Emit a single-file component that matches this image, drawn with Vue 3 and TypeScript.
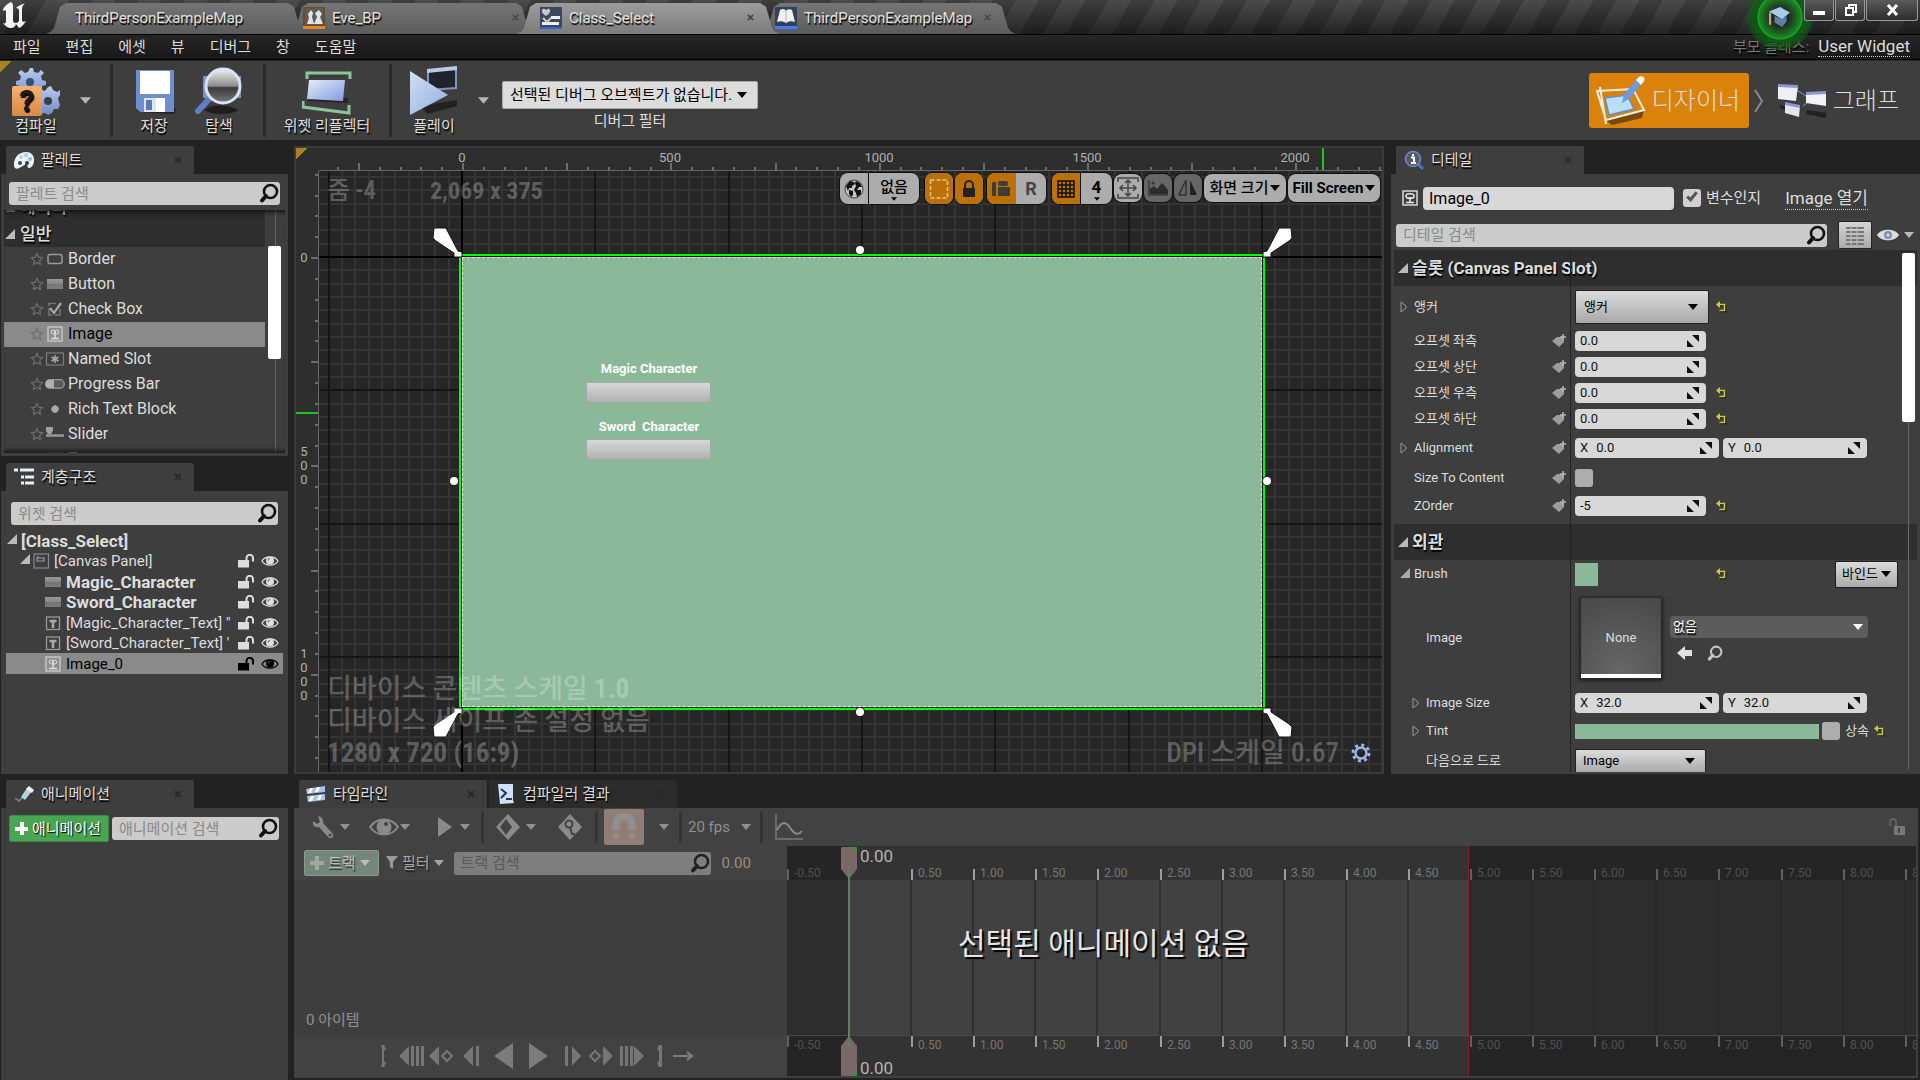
<script setup lang="ts">
import { computed, onBeforeUnmount, onMounted, ref } from 'vue'

interface DocTab { title: string; icon: string; active: boolean; closable: boolean; cls: string }
interface PaletteItem { name: string; icon: string; selected?: boolean }
interface TreeRow { name: string; icon: string; depth: number; bold?: boolean; open?: boolean; selected?: boolean; toggles?: boolean }

const docTabs: DocTab[] = [
  { title: 'ThirdPersonExampleMap', icon: '', active: false, closable: false, cls: 'first' },
  { title: 'Eve_BP', icon: 'i-blueprint', active: false, closable: true, cls: 'second' },
  { title: 'Class_Select', icon: 'i-widgetbp', active: true, closable: true, cls: 'third' },
  { title: 'ThirdPersonExampleMap', icon: 'i-book', active: false, closable: true, cls: 'fourth' },
]

const menus = ['파일', '편집', '에셋', '뷰', '디버그', '창', '도움말']

const paletteItems: PaletteItem[] = [
  { name: 'Border', icon: 'w-border' },
  { name: 'Button', icon: 'w-button' },
  { name: 'Check Box', icon: 'w-check' },
  { name: 'Image', icon: 'w-image', selected: true },
  { name: 'Named Slot', icon: 'w-slot' },
  { name: 'Progress Bar', icon: 'w-progress' },
  { name: 'Rich Text Block', icon: 'w-rich' },
  { name: 'Slider', icon: 'w-slider' },
  { name: 'Text', icon: 'w-text' },
]

const treeRows: TreeRow[] = [
  { name: '[Class_Select]', icon: '', depth: 0, bold: true, open: true },
  { name: '[Canvas Panel]', icon: 'w-canvas', depth: 1, open: true, toggles: true },
  { name: 'Magic_Character', icon: 'w-button', depth: 2, bold: true, toggles: true },
  { name: 'Sword_Character', icon: 'w-button', depth: 2, bold: true, toggles: true },
  { name: '[Magic_Character_Text] "', icon: 'w-text', depth: 2, toggles: true },
  { name: "[Sword_Character_Text] '", icon: 'w-text', depth: 2, toggles: true },
  { name: 'Image_0', icon: 'w-image', depth: 2, selected: true, toggles: true },
]

const offsets = [
  { id: 'off-left', label: '오프셋 좌측', value: '0.0', reset: false },
  { id: 'off-top', label: '오프셋 상단', value: '0.0', reset: false },
  { id: 'off-right', label: '오프셋 우측', value: '0.0', reset: true },
  { id: 'off-bottom', label: '오프셋 하단', value: '0.0', reset: true },
]

const objectName = ref('Image_0')
const isVariable = ref(true)

/* Rulers and the timeline only draw as many marks as the window can show. */
const windowWidth = ref(window.innerWidth)
const windowHeight = ref(window.innerHeight)
const onResize = (): void => {
  windowWidth.value = window.innerWidth
  windowHeight.value = window.innerHeight
}
onMounted(() => window.addEventListener('resize', onResize))
onBeforeUnmount(() => window.removeEventListener('resize', onResize))

const range = (from: number, to: number): number[] =>
  Array.from({ length: Math.max(0, to - from + 1) }, (_, i) => from + i)
const px = (n: number): number => Math.round(n)

/* Designer canvas: 24 slate units map to 10 px at zoom -4. */
const originX = 143
const originY = 86
const gridStep = 40 / 3
const tickStep = 125 / 6
const canvasWidth = computed(() => windowWidth.value - 857)
const canvasHeight = computed(() => windowHeight.value - 480)
const gridX = computed(() => range(-10, Math.ceil((canvasWidth.value - originX) / gridStep)))
const gridY = computed(() => range(-6, Math.ceil((canvasHeight.value - originY) / gridStep)))
const ticksX = computed(() => range(-6, Math.floor((canvasWidth.value - originX) / tickStep)))
const ticksY = computed(() => range(-4, Math.floor((canvasHeight.value - originY) / tickStep)))
const labelsX = computed(() => range(0, Math.floor((canvasWidth.value - originX - 20) / (tickStep * 10))).map((n) => n * 500))
const labelsY = computed(() => range(0, Math.floor((canvasHeight.value - originY - 40) / (tickStep * 10))).map((n) => n * 500))

/* Timeline: one tick every half second. */
const timeOrigin = 62
const timeStep = 62.1
const timeTicks = computed(() => range(-1, Math.floor((windowWidth.value - 791 - timeOrigin) / timeStep)))
const timeX = (k: number): number => Math.round(timeOrigin + timeStep * k)
const timeLabel = (k: number): string => (k / 2).toFixed(2)
</script>

<template>
  <div class="editor">
    <svg class="sprite" aria-hidden="true">
      <defs>
        <linearGradient id="g-blue" x1="0" y1="0" x2="1" y2="1"><stop offset="0" stop-color="#e4ecfb" /><stop offset="1" stop-color="#7f9bdc" /></linearGradient>
        <linearGradient id="g-gear" x1="0" y1="0" x2="0" y2="1"><stop offset="0" stop-color="#b9cdf3" /><stop offset="1" stop-color="#7488c4" /></linearGradient>
        <linearGradient id="g-orange" x1="0" y1="0" x2="0" y2="1"><stop offset="0" stop-color="#f7b16f" /><stop offset="1" stop-color="#d98a45" /></linearGradient>
        <linearGradient id="g-play" x1="0" y1="0" x2="1" y2="1"><stop offset="0" stop-color="#d3dcf5" /><stop offset="1" stop-color="#8fb2dc" /></linearGradient>
        <linearGradient id="g-glass" x1="0" y1="0" x2="0" y2="1"><stop offset="0" stop-color="#f2f2f2" /><stop offset=".5" stop-color="#8c8c8c" /><stop offset=".55" stop-color="#3c3c3c" /><stop offset="1" stop-color="#777" /></linearGradient>
        <linearGradient id="g-btn" x1="0" y1="0" x2="0" y2="1"><stop offset="0" stop-color="#999" /><stop offset=".5" stop-color="#858585" /><stop offset=".5" stop-color="#757575" /><stop offset="1" stop-color="#7c7c7c" /></linearGradient>
      </defs>
      <symbol id="caret" viewBox="0 0 10 6"><path d="M0 0h10L5 6z" fill="currentColor" /></symbol>
      <symbol id="close" viewBox="0 0 8 8"><path d="M1 1l6 6M7 1L1 7" stroke="currentColor" stroke-width="2" /></symbol>
      <symbol id="open" viewBox="0 0 10 10"><path d="M10 0v10H0z" fill="currentColor" /></symbol>
      <symbol id="closed" viewBox="0 0 7 12"><path d="M1 1l5 4v2l-5 4z" fill="none" stroke="currentColor" /></symbol>
      <symbol id="mag" viewBox="0 0 20 20"><circle cx="11.500" cy="8.500" r="6.500" fill="none" stroke="currentColor" stroke-width="2.600" /><path d="M7 13L3 17.500" stroke="currentColor" stroke-width="4" stroke-linecap="round" /></symbol>
      <symbol id="star" viewBox="0 0 14 14"><path d="M7 1.500l1.700 3.700 3.900.5-2.900 2.700.8 4L7 10.500l-3.500 1.900.8-4L1.400 5.700l3.900-.5z" fill="none" stroke="currentColor" stroke-width="1.200" /></symbol>
      <symbol id="eye" viewBox="0 0 18 14"><path d="M1 7C4 1.500 14 1.500 17 7C14 12.500 4 12.500 1 7z" fill="none" stroke="currentColor" stroke-width="1.300" /><circle cx="9" cy="6.500" r="4" fill="currentColor" /><path d="M7 6.500a2 2 0 0 1 2-2" stroke="#5e5e5e" fill="none" /></symbol>
      <symbol id="unlock" viewBox="0 0 17 14"><path d="M0 6h11v7.500H0z" fill="currentColor" /><path d="M8.500 6V4a3 3 0 0 1 6.500 0v3.500" fill="none" stroke="currentColor" stroke-width="2" /></symbol>
      <symbol id="tag" viewBox="0 0 14 14"><path d="M0 7l5-4h5l2 2v3l-5 5z" fill="#9c9c9c" /><path d="M11 0v6M8 3h6" stroke="#b8b8b8" stroke-width="1.500" /></symbol>
      <symbol id="reset" viewBox="0 0 12 12"><path d="M3 4.500h7.500v6H5" fill="none" stroke="#111" stroke-width="1.500" /><path d="M2 3.500h7.500v6H4.500" fill="none" stroke="#c8cc3f" stroke-width="1.600" /><path d="M5 0v7L1 3.500z" fill="#c8cc3f" /></symbol>
      <symbol id="spin" viewBox="0 0 12 12"><path d="M5 0h7v7z" fill="#111" /><path d="M0 5v7h7z" fill="#111" /></symbol>
      <symbol id="w-border" viewBox="0 0 20 16"><rect x="3" y="3.500" width="14" height="9" rx="2" fill="none" stroke="#9a9a9a" stroke-width="1.500" /></symbol>
      <symbol id="w-button" viewBox="0 0 20 16"><rect x="2" y="3" width="16" height="10" fill="url(#g-btn)" /></symbol>
      <symbol id="w-check" viewBox="0 0 20 16"><path d="M4 5V2.500h7M4 7v7h3M10 14h5V8" fill="none" stroke="#777" stroke-width="1.500" /><path d="M5 7l4 5 7-10" fill="none" stroke="#a8a8a8" stroke-width="2.200" /></symbol>
      <symbol id="w-image" viewBox="0 0 20 16"><rect x="3" y="1" width="14" height="14" fill="#8f8f8f" stroke="#c4c4c4" stroke-width="1.500" /><circle cx="8.300" cy="6" r="2" fill="none" stroke="#ddd" /><circle cx="11.700" cy="6" r="2" fill="none" stroke="#ddd" /><path d="M10 5v7M6 12.500h8" stroke="#ddd" stroke-width="1.500" /></symbol>
      <symbol id="w-slot" viewBox="0 0 20 16"><rect x="1.500" y="2" width="17" height="12" fill="none" stroke="#7d7d7d" stroke-width="1.200" /><path d="M10 4v8M6.500 6l7 4M13.500 6l-7 4" stroke="#aaa" stroke-width="1.500" /></symbol>
      <symbol id="w-progress" viewBox="0 0 20 16"><rect x=".7" y="3.700" width="18.500" height="8.500" rx="4" fill="#5a5a5a" stroke="#999" stroke-width="1.300" /><path d="M4 4h5v8H4a3.500 4 0 0 1 0-8z" fill="#b0b0b0" /></symbol>
      <symbol id="w-rich" viewBox="0 0 20 16"><path d="M10 4l3 1.500L14 8l-1.500 3L10 12l-2.500-1L6 8l1.500-2.500z" fill="#a8a8a8" /></symbol>
      <symbol id="w-slider" viewBox="0 0 20 16"><path d="M1 9.500h18" stroke="#999" stroke-width="2.500" /><path d="M1 1h7v4L6 8H3L1 5z" fill="#a0a0a0" /></symbol>
      <symbol id="w-text" viewBox="0 0 20 16"><rect x="3.500" y="2" width="13" height="12.500" fill="none" stroke="#999" stroke-width="1.300" /><path d="M6.500 6h7M10 6v7" stroke="#aaa" stroke-width="2.500" /></symbol>
      <symbol id="w-canvas" viewBox="0 0 20 16"><rect x="3" y="1" width="14.500" height="14" fill="none" stroke="#8a8a8a" stroke-width="1.200" /><path d="M6 5h7v3H6zM7 5V3" fill="none" stroke="#9c9cae" stroke-width="1.200" /></symbol>
      <symbol id="i-blueprint" viewBox="0 0 22 22"><path d="M0 0h22v22H0z" fill="#6a4a28" /><path d="M2 1h18v17H2z" fill="#5c5c5c" /><path d="M4 17l2-6-1-4 3-4 2 3-1 4 2 7zM11 17l3-7-2-4 4-3 3 4-2 3 3 7z" fill="#e4e4e4" /><path d="M0 19h22v3H0z" fill="#e58a1c" /></symbol>
      <symbol id="i-widgetbp" viewBox="0 0 22 22"><path d="M0 0h22v22H0z" fill="#3c4860" /><path d="M2 3c2-3 4 0 4 0s3-3 4 0c1 3-4 6-4 6S1 6 2 3z" fill="#c9c9c9" /><path d="M11 9h9v3h-9zM2 15h17v3H2z" fill="#efefef" /><path d="M3 11l4 4 4-4" fill="none" stroke="#ccc" stroke-width="2" /><path d="M0 20h22v2H0z" fill="#2f62d8" /></symbol>
      <symbol id="i-book" viewBox="0 0 22 22"><path d="M0 0h22v22H0z" fill="#33405c" /><path d="M2 15L5 3c3-2 5-1 6 1 1-2 4-2 6-1l3 12c-3-1-6-1-9 1-3-2-6-2-9-1z" fill="#f0f0f0" /><path d="M11 4v12" stroke="#bbb" /><path d="M0 19h22v3H0z" fill="#3f7bff" /></symbol>
    </svg>

    <header class="titlebar">
      <svg class="logo" viewBox="0 0 24 28" role="img" aria-label="Unreal Engine">
        <path d="M9 1C5 3 1 6 1 10c2-1 3-1 3 1v9c0 2-1 3-3 2 2 3 5 5 8 5 2 0 4-1 5-4l3 4c3-1 5-4 7-7-2 1-4 1-4-1V8c0-2 1-4 3-6-3 1-7 3-9 5 2 0 3 1 3 3v10c-1 1-2 2-3 2-2 0-3-1-3-3V6c0-2 0-4-2-5z" fill="#f4f4f4" />
      </svg>
      <nav class="doc-tabs">
        <div v-for="(t, i) in docTabs" :key="i" class="doc-tab" :class="[t.cls, { active: t.active }]">
          <svg v-if="t.icon" class="doc-icon"><use :href="'#' + t.icon" /></svg>
          <span class="doc-title">{{ t.title }}</span>
          <button v-if="t.closable" class="bare tab-x" aria-label="탭 닫기"><svg width="7" height="7"><use href="#close" /></svg></button>
        </div>
      </nav>
      <div class="tutorial">
        <svg viewBox="0 0 20 20" width="22" height="22"><path d="M0 5l10-4 9 5-7 6z" fill="#a9cbea" /><path d="M5 9v6l7 4 4-5V9l-4 3z" fill="#5e7f9e" /><path d="M1 6v11" stroke="#c8a468" stroke-width="2" /></svg>
      </div>
      <div class="window-buttons">
        <button class="win" aria-label="최소화"><svg width="14" height="12"><path d="M1 7h12v4H1z" fill="#fff" /></svg></button>
        <button class="win" aria-label="이전 크기로"><svg width="13" height="12"><path d="M2 4h7v7H2zM5 4V1h7v7H9" fill="none" stroke="#fff" stroke-width="2" /></svg></button>
        <button class="win wide" aria-label="닫기"><svg width="13" height="12"><path d="M2 1l9 10M11 1L2 11" stroke="#fff" stroke-width="3" /></svg></button>
      </div>
    </header>

    <div class="menubar">
      <button v-for="m in menus" :key="m" class="bare menu-item">{{ m }}</button>
      <span class="parent-label">부모 클래스:</span>
      <a href="#" class="parent-link">User Widget</a>
    </div>

    <div class="toolbar">
      <span class="fold"></span>
      <button class="bare tool compile">
        <svg viewBox="0 0 48 50" width="48" height="50">
          <path d="M18 2l3 0 1 4 4 1 3-3 3 3-3 3 1 4 4 1v4l-4 1-1 4 2 3-3 3-3-3-4 1-1 4h-4l-1-4-3-1-3 3-3-3 3-4-1-3-4-1v-4l4-1 1-4-3-3 3-3 4 3 3-1z" fill="url(#g-gear)" />
          <circle cx="18" cy="16" r="4" fill="#33506f" />
          <path d="M36 21l3-1 2 4 4 2 3-2v5l-2 3 1 4 1 3-2 4-4 0-2 4-4 2-3-2-4 1-3-3v-18l4-3 3 1z" fill="url(#g-gear)" />
          <circle cx="36" cy="35" r="4" fill="#3c3c44" />
          <rect x="0" y="20" width="30" height="30" rx="2" fill="url(#g-orange)" />
          <text x="15" y="45" text-anchor="middle" font-family="Roboto" font-weight="900" font-size="29" fill="#1a1a1a">?</text>
        </svg>
        <span>컴파일</span>
      </button>
      <button class="bare drop" aria-label="컴파일 옵션"><svg width="11" height="7"><use href="#caret" /></svg></button>
      <i class="bar"></i>
      <button class="bare tool save">
        <svg viewBox="0 0 48 50" width="48" height="50">
          <path d="M8 46l36 2 2-6H10z" fill="#222" /><path d="M6 4h38v42H10l-4-4z" fill="#6d8ed0" /><path d="M10 5h30v23H10z" fill="#fff" /><path d="M14 32h21v14H14z" fill="#dfe4ee" /><path d="M16 34h6v10h-6z" fill="#5b78b8" /><path d="M26 32h9v14h-9z" fill="#fff" />
        </svg>
        <span>저장</span>
      </button>
      <button class="bare tool find">
        <svg viewBox="0 0 50 50" width="50" height="50">
          <path d="M10 44c10-8 30-4 34 0-6 5-24 6-34 0z" fill="#1f1f1f" /><path d="M9 10h38v22H9z" fill="#7a93c6" />
          <path d="M16 32L4 45" stroke="#5f7fc4" stroke-width="6" stroke-linecap="round" /><circle cx="29" cy="20" r="17" fill="url(#g-glass)" stroke="#d7e2f5" stroke-width="3" />
        </svg>
        <span>탐색</span>
      </button>
      <i class="bar"></i>
      <button class="bare tool reflector">
        <svg viewBox="0 0 50 50" width="50" height="50">
          <path d="M5 13V7h43v6M1 35v6l46 6v-8" fill="none" stroke="#8dc49a" stroke-width="3" /><path d="M6 35l40 2v-5H6z" fill="#252525" /><path d="M7 14h36l-2 21-36-2z" fill="url(#g-blue)" />
        </svg>
        <span>위젯 리플렉터</span>
      </button>
      <i class="bar"></i>
      <button class="bare tool play">
        <svg viewBox="0 0 50 50" width="50" height="50">
          <path d="M12 40l36-6v6l-30 8z" fill="#222" /><path d="M19 5l28-3v20l-28 2z" fill="#20242c" stroke="#7e96bb" stroke-width="2" /><path d="M18 3l30-3v4l-30 3z" fill="#b9cdea" /><path d="M1 5l38 24L1 49z" fill="url(#g-play)" />
        </svg>
        <span>플레이</span>
      </button>
      <button class="bare drop" aria-label="플레이 옵션"><svg width="11" height="7"><use href="#caret" /></svg></button>
      <div class="debug">
        <span class="combo debug-combo">
          <select id="debug-filter"><option>선택된 디버그 오브젝트가 없습니다.</option></select>
          <svg width="10" height="6"><use href="#caret" /></svg>
        </span>
        <label for="debug-filter">디버그 필터</label>
      </div>
      <div class="modes">
        <button class="bare mode on">
          <svg viewBox="0 0 50 50" width="50" height="50">
            <path d="M8 43l40-9-2 8-30 7z" fill="#7a4a0c" /><path d="M1 15l36-2 11 21-38 10zM4 11l6 37" fill="none" stroke="#f3efe6" stroke-width="2" /><path d="M9 22l22-3 7 14-25 6z" fill="#b9dff5" stroke="#5f90d0" stroke-width="1.500" /><path d="M26 27l2-9L42 2l5 4-14 17z" fill="#6f9be6" /><path d="M40 4l3-3c3-2 7 1 5 4l-3 4z" fill="#fff" />
          </svg>
          <span>디자이너</span>
        </button>
        <svg class="chevron" viewBox="0 0 10 24"><path d="M1 1l7 11-7 11" fill="none" stroke="#8a8a8a" stroke-width="2" /></svg>
        <button class="bare mode">
          <svg viewBox="0 0 50 36" width="50" height="36">
            <path d="M18 6l14 9M26 23l10-8" stroke="#8e9cc0" /><path d="M30 27l20 3-2 5-19-4z" fill="#222" /><path d="M2 22l8 2 0 3-6-1z" fill="#222" /><path d="M1 2l20 1-2 15-18-2z" fill="#eef0f5" /><path d="M1 1l20 1v3L1 4z" fill="#8898d4" /><path d="M29 10l20-1v14l-20-3z" fill="#f2f3f6" /><path d="M29 9l20-1v3l-20 1z" fill="#8898d4" /><path d="M8 20l15 3-1 11-14-4z" fill="#e3e5ea" /><path d="M8 19l15 3v3L8 22z" fill="#8898d4" />
          </svg>
          <span>그래프</span>
        </button>
      </div>
    </div>

    <main class="body">
      <aside class="left">
        <section class="dock palette">
          <div class="dock-tab">
            <svg viewBox="0 0 20 18" width="20" height="18"><path d="M0 14C0 6 5 1 12 1c5 0 8 3 8 8 0 4-2 8-5 8-2 0-1-4-3-4-1 0-2 2-5 3-3 2-7 3-7-2z" fill="#eef4fb" /><circle cx="6" cy="12" r="2" fill="#444" /><circle cx="13" cy="12" r="2" fill="#3a3a3a" /><circle cx="7" cy="6" r="2" fill="#b9d4f3" /><circle cx="12" cy="4" r="2" fill="#a5c8ef" /><circle cx="16" cy="8" r="2" fill="#8fb9ea" /></svg>
            <span>팔레트</span><button class="bare tab-x" aria-label="닫기"><svg width="8" height="8"><use href="#close" /></svg></button>
          </div>
          <div class="pane">
            <div class="search"><input type="search" aria-label="팔레트 검색" placeholder="팔레트 검색" /><svg><use href="#mag" /></svg></div>
            <div class="scroller">
              <div class="palette-list">
                <h3 class="category"><svg width="10" height="10"><use href="#open" /></svg>에디터</h3>
                <h3 class="category"><svg width="10" height="10"><use href="#open" /></svg>일반</h3>
                <ul>
                  <li v-for="p in paletteItems" :key="p.name" :class="{ sel: p.selected }">
                    <svg class="star"><use href="#star" /></svg><svg class="wicon"><use :href="'#' + p.icon" /></svg><span>{{ p.name }}</span>
                  </li>
                </ul>
              </div>
              <div class="track"><i class="thumb"></i></div>
            </div>
          </div>
        </section>

        <section class="dock hierarchy">
          <div class="dock-tab">
            <svg viewBox="0 0 20 18" width="20" height="18"><path d="M0 2h4M6 2h14M7 9h3M11 9h9M7 15h3M11 15h9" stroke="#e6eff6" stroke-width="3" /></svg>
            <span>계층구조</span><button class="bare tab-x" aria-label="닫기"><svg width="8" height="8"><use href="#close" /></svg></button>
          </div>
          <div class="pane">
            <div class="search"><input type="search" aria-label="위젯 검색" placeholder="위젯 검색" /><svg><use href="#mag" /></svg></div>
            <ul class="tree">
              <li v-for="r in treeRows" :key="r.name" :class="['d' + r.depth, { sel: r.selected, bold: r.bold }]">
                <svg v-if="r.open" class="exp"><use href="#open" /></svg>
                <svg v-if="r.icon" class="wicon"><use :href="'#' + r.icon" /></svg>
                <span class="tree-name">{{ r.name }}</span>
                <template v-if="r.toggles">
                  <button class="bare" aria-label="잠금"><svg width="17" height="14"><use href="#unlock" /></svg></button>
                  <button class="bare" aria-label="표시"><svg width="18" height="14"><use href="#eye" /></svg></button>
                </template>
              </li>
            </ul>
          </div>
        </section>

        <section class="dock animations">
          <div class="dock-tab">
            <svg viewBox="0 0 20 18" width="20" height="18"><path d="M1 13l4 3L14 7" fill="none" stroke="#777" stroke-width="2" /><path d="M7 12l6-9 5 3-7 9z" fill="#b9d0dd" /><path d="M12 4l3-3 5 4-2 3z" fill="#f2f6f8" /></svg>
            <span>애니메이션</span><button class="bare tab-x" aria-label="닫기"><svg width="8" height="8"><use href="#close" /></svg></button>
          </div>
          <div class="pane anim-row">
            <button class="add-anim"><svg width="13" height="13"><path d="M5 0h4v5h4v4H9v4H5V9H0V5h5z" fill="#fff" /></svg>애니메이션</button>
            <div class="search"><input type="search" aria-label="애니메이션 검색" placeholder="애니메이션 검색" /><svg><use href="#mag" /></svg></div>
          </div>
        </section>
      </aside>

      <div class="right">
        <div class="upper">
          <section class="viewport">
            <span class="fold"></span>
            <div class="corner"></div>
            <svg class="ruler-h">
              <g stroke="#6c6c6c" stroke-width="2">
                <line v-for="t in ticksX" :key="t" :x1="px(originX + 1 + t * tickStep)" :x2="px(originX + 1 + t * tickStep)" :y1="t % 5 === 0 ? 15 : 19" y2="23" />
              </g>
              <text v-for="l in labelsX" :key="l" :x="px(originX + l / 2.4)" y="14" text-anchor="middle">{{ l }}</text>
              <line x1="1004" x2="1004" y1="0" y2="23" stroke="#1fc41f" stroke-width="2" />
            </svg>
            <svg class="ruler-v">
              <g stroke="#6c6c6c" stroke-width="2">
                <line v-for="t in ticksY" :key="t" :y1="px(originY + 1 + t * tickStep)" :y2="px(originY + 1 + t * tickStep)" :x1="t % 5 === 0 ? 15 : 19" x2="22" />
              </g>
              <template v-for="l in labelsY" :key="l">
                <text v-for="(c, i) in String(l)" :key="i" x="8" :y="px(originY + 5 + l / 2.4 + (i - (String(l).length - 1) / 2) * 14)" text-anchor="middle">{{ c }}</text>
              </template>
              <line x1="0" x2="22" y1="242" y2="242" stroke="#1fc41f" stroke-width="2" />
            </svg>
            <div class="canvas">
              <svg class="grid">
                <g stroke="#343434" stroke-width="2">
                  <line v-for="g in gridX" :key="'x' + g" :x1="px(originX + g * gridStep)" :x2="px(originX + g * gridStep)" y1="0" y2="100%" />
                  <line v-for="g in gridY" :key="'y' + g" :y1="px(originY + g * gridStep)" :y2="px(originY + g * gridStep)" x1="0" x2="100%" />
                </g>
                <g stroke="#151515" stroke-width="2">
                  <template v-for="g in gridX" :key="'mx' + g"><line v-if="g % 10 === 0" :x1="px(originX + g * gridStep)" :x2="px(originX + g * gridStep)" y1="0" y2="100%" /></template>
                  <template v-for="g in gridY" :key="'my' + g"><line v-if="g % 10 === 0" :y1="px(originY + g * gridStep)" :y2="px(originY + g * gridStep)" x1="0" x2="100%" /></template>
                </g>
                <g stroke="#000" stroke-width="2"><line :x1="originX" :x2="originX" y1="0" y2="100%" /><line :y1="originY" :y2="originY" x1="0" x2="100%" /></g>
              </svg>
              <div class="design">
                <span class="slot-text magic-text">Magic Character</span>
                <button class="slot-btn magic-btn" aria-label="Magic_Character"></button>
                <span class="slot-text sword-text">Sword&nbsp; Character</span>
                <button class="slot-btn sword-btn" aria-label="Sword_Character"></button>
                <svg class="anchor tl" viewBox="0 0 31 31"><path d="M2 1h12l3 6 9 17 4 1v5h-8v-4L4 14l-3-3z" fill="#fff" stroke="#111" /></svg>
                <svg class="anchor tr" viewBox="0 0 31 31"><path d="M2 1h12l3 6 9 17 4 1v5h-8v-4L4 14l-3-3z" fill="#fff" stroke="#111" /></svg>
                <svg class="anchor bl" viewBox="0 0 31 31"><path d="M2 1h12l3 6 9 17 4 1v5h-8v-4L4 14l-3-3z" fill="#fff" stroke="#111" /></svg>
                <svg class="anchor br" viewBox="0 0 31 31"><path d="M2 1h12l3 6 9 17 4 1v5h-8v-4L4 14l-3-3z" fill="#fff" stroke="#111" /></svg>
                <i class="dot n"></i><i class="dot s"></i><i class="dot w"></i><i class="dot e"></i>
              </div>
              <div class="hud-top"><span>줌 -4</span><b class="coords">2,069 x 375</b></div>
              <div class="hud-bottom">
                <div><p>디바이스 콘텐츠 스케일 <b>1.0</b></p><p>디바이스 세이프 존 설정 없음</p><p><b>1280 x 720 (16:9)</b></p></div>
                <div class="dpi"><span>DPI 스케일 0.67</span>
                  <button class="bare" aria-label="설정"><svg width="20" height="20" viewBox="0 0 20 20"><circle cx="10" cy="10" r="5.500" fill="none" stroke="#9db2e6" stroke-width="2.500" /><circle cx="10" cy="10" r="8" fill="none" stroke="#9db2e6" stroke-width="3" stroke-dasharray="3 3.280" /></svg></button>
                </div>
              </div>
              <div class="view-tools">
                <div class="group">
                  <button class="vt" aria-label="현지화"><svg width="20" height="20" viewBox="0 0 20 20"><circle cx="10" cy="10" r="9" fill="#c4c4c4" stroke="#444" /><path d="M2 7l4-5 4 1 1 2-3 2 0 2-3 0-1 3zM5 11l4 1 0 4-2 2-2-3zM12 2l4 2 2 4-3 0-2 3 4 0 0 4-4 3-1-4-2-3 2-4-1-3z" fill="#111" /></svg></button>
                  <button class="vt text lang"><span>없음</span><svg width="6" height="4"><use href="#caret" /></svg></button>
                </div>
                <div class="group first-orange"><button class="vt on" aria-label="아웃라인"><svg width="20" height="22"><rect x="1.500" y="2" width="17" height="18" fill="none" stroke="#e3c493" stroke-width="1.500" stroke-dasharray="4 2" /></svg></button></div>
                <div class="group"><button class="vt on" aria-label="잠금 존중"><svg width="16" height="20"><path d="M2 9h12v9H2z" fill="#222" /><path d="M4 9V6a4 4 0 0 1 8 0v3" fill="none" stroke="#222" stroke-width="2" /></svg></button></div>
                <div class="group loc"><button class="vt on" aria-label="레이아웃 변환"><svg width="20" height="18"><rect x="1" y="2" width="4" height="14" rx="1" fill="#403c38" /><rect x="7" y="1" width="10" height="5" rx="2" fill="#403c38" /><rect x="7" y="7" width="12" height="9" rx="1" fill="#403c38" /></svg></button><button class="vt text r">R</button></div>
                <div class="group snap"><button class="vt on" aria-label="그리드 스냅"><svg width="20" height="20"><path d="M2 2h16v16H2zM2 6h16M2 10h16M2 14h16M6 2v16M10 2v16M14 2v16" fill="none" stroke="#111" stroke-width="1.500" /></svg></button><button class="vt text four"><span>4</span><svg width="6" height="4"><use href="#caret" /></svg></button></div>
                <div class="group low"><button class="vt" aria-label="화면 맞춤"><svg width="22" height="22"><path d="M1 5V1h20v4M1 17v4h20v-4M11 3v16M3 11h16M8 6l3-3 3 3M8 16l3 3 3-3M6 8l-3 3 3 3M16 8l3 3-3 3" fill="none" stroke="#444" stroke-width="1.500" /></svg></button></div>
                <div class="group low dim"><button class="vt" aria-label="미리보기 배경"><svg width="22" height="18"><path d="M1 1h2v14h18v2H1z" fill="#444" /><path d="M3 15V10l4-3 3 3 5-6 3 3 3 4v4z" fill="#2c2c2c" /><circle cx="6" cy="4" r="1.500" fill="#333" /></svg></button></div>
                <div class="group low dim"><button class="vt" aria-label="플립"><svg width="20" height="18"><path d="M8 1v15H1z" fill="none" stroke="#333" stroke-width="1.500" /><path d="M12 1v15h7z" fill="#222" /></svg></button></div>
                <div class="group low"><button class="vt text size">화면 크기<svg width="10" height="6"><use href="#caret" /></svg></button></div>
                <div class="group low"><button class="vt text fill">Fill Screen<svg width="10" height="6"><use href="#caret" /></svg></button></div>
              </div>
            </div>
          </section>

          <section class="dock details">
            <div class="dock-tab">
              <svg viewBox="0 0 20 20" width="20" height="20"><path d="M14 14l5 5" stroke="#4f74cc" stroke-width="3" /><circle cx="9" cy="9" r="7.500" fill="#555c66" stroke="#6d8bd0" stroke-width="1.500" /><path d="M7 7.500h3v5M7 13h5M9 4v2" stroke="#fff" stroke-width="2" fill="none" /></svg>
              <span>디테일</span><button class="bare tab-x" aria-label="닫기"><svg width="8" height="8"><use href="#close" /></svg></button>
            </div>
            <div class="pane">
              <div class="name-row">
                <svg class="wicon" viewBox="0 0 20 16"><rect x="3" y="1" width="14" height="14" fill="none" stroke="#d8d8d8" stroke-width="1.500" /><path d="M6 6c0-3 8-3 8 0s-3 2-4 2-4 1-4-2zM10 7v5M6 12.500h8" fill="none" stroke="#e8e8e8" stroke-width="1.600" /></svg>
                <input v-model="objectName" class="name-input" type="text" aria-label="이름" />
                <label class="isvar"><input v-model="isVariable" type="checkbox" class="check" />변수인지</label>
                <a href="#" class="open-link">Image 열기</a>
              </div>
              <div class="details-search">
                <div class="search"><input type="search" aria-label="디테일 검색" placeholder="디테일 검색" /><svg><use href="#mag" /></svg></div>
                <button class="matrix" aria-label="프로퍼티 매트릭스"><svg width="18" height="19"><path d="M0 2h18M0 6h18M0 10h18M0 14h18M0 18h18" stroke="#777" stroke-width="2" /><path d="M5 0v19M11 0v19" stroke="#c4c4c4" stroke-width="1" /></svg></button>
                <button class="bare view-eye" aria-label="보기 옵션"><svg width="22" height="14" viewBox="0 0 22 14"><path d="M0 7C4 0 18 0 22 7C18 14 4 14 0 7z" fill="#dcdcdc" /><circle cx="11" cy="7" r="4" fill="#7d91b4" /><circle cx="11" cy="7" r="1.500" fill="#dfe8f5" /></svg><svg width="10" height="6"><use href="#caret" /></svg></button>
              </div>
              <div class="props">
                <h3 class="section"><svg width="10" height="10"><use href="#open" /></svg>슬롯 (Canvas Panel Slot)</h3>
                <div class="row h42">
                  <div class="lab"><svg class="closed"><use href="#closed" /></svg><span>앵커</span></div>
                  <div class="val"><button class="anchor-btn">앵커<svg width="10" height="6"><use href="#caret" /></svg></button><button class="bare reset" aria-label="기본값으로"><svg><use href="#reset" /></svg></button></div>
                </div>
                <div v-for="o in offsets" :key="o.id" class="row h26">
                  <div class="lab"><label :for="o.id">{{ o.label }}</label><svg class="tag"><use href="#tag" /></svg></div>
                  <div class="val"><span class="num"><input :id="o.id" type="text" :value="o.value" /><svg><use href="#spin" /></svg></span><button v-if="o.reset" class="bare reset" aria-label="기본값으로"><svg><use href="#reset" /></svg></button></div>
                </div>
                <div class="row h32">
                  <div class="lab"><svg class="closed"><use href="#closed" /></svg><span>Alignment</span><svg class="tag"><use href="#tag" /></svg></div>
                  <div class="val pair"><label class="num half">X<input type="text" value="0.0" /><svg><use href="#spin" /></svg></label><label class="num half">Y<input type="text" value="0.0" /><svg><use href="#spin" /></svg></label></div>
                </div>
                <div class="row h28">
                  <div class="lab"><label for="stc">Size To Content</label><svg class="tag"><use href="#tag" /></svg></div>
                  <div class="val"><input id="stc" type="checkbox" class="check" /></div>
                </div>
                <div class="row h28 last">
                  <div class="lab"><label for="zorder">ZOrder</label><svg class="tag"><use href="#tag" /></svg></div>
                  <div class="val"><span class="num"><input id="zorder" type="text" value="-5" /><svg><use href="#spin" /></svg></span><button class="bare reset" aria-label="기본값으로"><svg><use href="#reset" /></svg></button></div>
                </div>
                <h3 class="section"><svg width="10" height="10"><use href="#open" /></svg>외관</h3>
                <div class="row h28">
                  <div class="lab"><svg class="opened"><use href="#open" /></svg><span>Brush</span></div>
                  <div class="val brush"><i class="swatch"></i><button class="bare reset" aria-label="기본값으로"><svg><use href="#reset" /></svg></button><button class="bind">바인드<svg width="10" height="6"><use href="#caret" /></svg></button></div>
                </div>
                <div class="row h100 sub">
                  <div class="lab"><span>Image</span></div>
                  <div class="val">
                    <div class="thumbnail">None</div>
                    <div class="asset">
                      <button class="asset-combo">없음<svg width="10" height="6"><use href="#caret" /></svg></button>
                      <div class="asset-tools">
                        <button class="bare" aria-label="선택된 에셋 사용"><svg width="16" height="16"><path d="M0 8l8-7v4h7v6H8v4z" fill="#e2e2e2" /></svg></button>
                        <button class="bare" aria-label="에셋 찾기"><svg width="16" height="16"><use href="#mag" /></svg></button>
                      </div>
                    </div>
                  </div>
                </div>
                <div class="row h30 sub">
                  <div class="lab"><svg class="closed"><use href="#closed" /></svg><span>Image Size</span></div>
                  <div class="val pair"><label class="num half">X<input type="text" value="32.0" /><svg><use href="#spin" /></svg></label><label class="num half">Y<input type="text" value="32.0" /><svg><use href="#spin" /></svg></label></div>
                </div>
                <div class="row h26 sub">
                  <div class="lab"><svg class="closed"><use href="#closed" /></svg><span>Tint</span></div>
                  <div class="val tint"><i class="tint-bar"></i><label class="inherit"><input type="checkbox" class="check" />상속</label><button class="bare reset" aria-label="기본값으로"><svg><use href="#reset" /></svg></button></div>
                </div>
                <div class="row h34 sub">
                  <div class="lab"><label for="drawas">다음으로 드로</label></div>
                  <div class="val"><span class="combo draw-combo"><select id="drawas"><option>Image</option></select><svg width="10" height="6"><use href="#caret" /></svg></span></div>
                </div>
                <div class="props-track"><i class="props-thumb"></i></div>
              </div>
            </div>
          </section>
        </div>

        <section class="lower">
          <div class="bottom-tabs">
            <div class="dock-tab">
              <svg viewBox="0 0 20 18" width="20" height="18"><path d="M0 4l19-3v6L1 9zM1 11l18-2v6L2 17z" fill="#a9c3e6" /><path d="M4 3l3 0-2 5H2zM11 2h3l-2 5H9zM5 11h3l-2 5H3zM13 10h3l-2 5h-3z" fill="#fff" /></svg>
              <span>타임라인</span><button class="bare tab-x" aria-label="닫기"><svg width="8" height="8"><use href="#close" /></svg></button>
            </div>
            <div class="dock-tab idle">
              <svg viewBox="0 0 20 20" width="20" height="20"><path d="M2 0h15v16l1 3-14 1z" fill="#cfe0f8" /><path d="M5 5l5 4-5 5M10 15h6" fill="none" stroke="#23375c" stroke-width="2" /></svg>
              <span>컴파일러 결과</span><button class="bare tab-x" aria-label="닫기"><svg width="8" height="8"><use href="#close" /></svg></button>
            </div>
          </div>
          <div class="sequencer">
            <div class="seq-toolbar">
              <button class="bare s1" aria-label="옵션"><svg width="24" height="24"><path d="M7 1c4 1 6 4 5 7l10 11c1 3-1 5-4 4L8 12c-4 1-7-2-6-6l4 3 3-2-1-3z" fill="#8a8a8a" /><circle cx="19" cy="20" r="1.500" fill="#444" /></svg><svg class="c" width="10" height="6"><use href="#caret" /></svg></button>
              <button class="bare s2" aria-label="보기"><svg width="30" height="22"><path d="M1 11C8 1 22 1 29 11C22 21 8 21 1 11z" fill="none" stroke="#8a8a8a" stroke-width="2" /><circle cx="15" cy="11" r="7.500" fill="#8a8a8a" /><circle cx="17" cy="8" r="2" fill="#444" /></svg><svg class="c" width="10" height="6"><use href="#caret" /></svg></button>
              <button class="bare s3" aria-label="재생 옵션"><svg width="14" height="20"><path d="M0 0l14 10L0 20z" fill="#8a8a8a" /></svg><svg class="c" width="10" height="6"><use href="#caret" /></svg></button>
              <i class="bar"></i>
              <button class="bare s4" aria-label="키 옵션"><svg width="26" height="28"><path d="M13 1l12 13-12 13L1 14z" fill="#8a8a8a" /><path d="M11 6l-6 8 6 8 6-8z" fill="#444" /></svg><svg class="c" width="10" height="6"><use href="#caret" /></svg></button>
              <button class="bare s5" aria-label="자동 키"><svg width="26" height="28"><path d="M13 1l12 13-12 13L1 14z" fill="#8a8a8a" /><circle cx="12" cy="11" r="3.500" fill="none" stroke="#444" stroke-width="2" /><path d="M13 14l2 7h3" fill="none" stroke="#444" stroke-width="2" /></svg></button>
              <i class="bar"></i>
              <button class="magnet" aria-label="스냅"><svg width="24" height="28"><path d="M4 17v-6a8 8 0 0 1 16 0v6" fill="none" stroke="#8f8f8f" stroke-width="7" /><path d="M1 21h6v5H1zM17 21h6v5h-6z" fill="#8f8f8f" /></svg></button>
              <button class="bare s6" aria-label="스냅 옵션"><svg width="10" height="6"><use href="#caret" /></svg></button>
              <i class="bar"></i>
              <button class="bare fps">20 fps<svg width="10" height="6"><use href="#caret" /></svg></button>
              <i class="bar"></i>
              <button class="bare s7" aria-label="커브 에디터"><svg width="28" height="28"><path d="M1 1v25h27" fill="none" stroke="#6b6b6b" stroke-width="2" /><path d="M2 17C8 6 12 10 16 16s8 6 11 2" fill="none" stroke="#8a8a8a" stroke-width="2" /></svg></button>
              <button class="bare seq-lock" aria-label="잠금"><svg width="18" height="18"><path d="M6 8h11v9H6z" fill="#777" /><path d="M2 8V4a3 3 0 0 1 6 0v4" fill="none" stroke="#6a6a6a" stroke-width="1.500" /><path d="M11 10v5" stroke="#444" stroke-width="2" /></svg></button>
            </div>
            <div class="seq-main">
              <div class="tracks">
                <div class="track-tools">
                  <button class="add-track"><svg width="14" height="14"><path d="M5 0h4v5h5v4H9v5H5V9H0V5h5z" fill="#a0a8a0" /></svg>트랙<svg width="10" height="6"><use href="#caret" /></svg></button>
                  <button class="bare filter"><svg width="12" height="14"><path d="M0 0h12L7 6v7l-3-2V6z" fill="#9a9a9a" /></svg>필터<svg width="10" height="6"><use href="#caret" /></svg></button>
                  <div class="search"><input type="search" aria-label="트랙 검색" placeholder="트랙 검색" /><svg><use href="#mag" /></svg></div>
                  <span class="time">0.00</span>
                </div>
                <div class="items">0 아이템</div>
                <div class="transport">
                  <button class="bare" aria-label="시작 설정"><svg width="10" height="24"><path d="M1 1h3l2 4-2 2v10l2 2-2 4H1l1-4V5z" fill="#767676" /></svg></button>
                  <button class="bare t2" aria-label="처음으로"><svg width="26" height="20"><path d="M10 0v20L0 10zM12 0h3v20h-3zM17 0h3v20h-3zM22 0h3v20h-3z" fill="#767676" /></svg></button>
                  <button class="bare t3" aria-label="이전 키"><svg width="26" height="20"><path d="M10 0v20L0 10z" fill="#767676" /><path d="M18 5l5 5-5 5-5-5z" fill="none" stroke="#767676" stroke-width="2" /></svg></button>
                  <button class="bare t4" aria-label="한 프레임 뒤로"><svg width="18" height="20"><path d="M10 0v20L0 10zM13 0h3v20h-3z" fill="#767676" /></svg></button>
                  <button class="bare t5" aria-label="역재생"><svg width="19" height="26"><path d="M19 0v26L0 13z" fill="#7c7c7c" /></svg></button>
                  <button class="bare t6" aria-label="재생"><svg width="19" height="26"><path d="M0 0v26l19-13z" fill="#7c7c7c" /></svg></button>
                  <button class="bare t6" aria-label="한 프레임 앞으로"><svg width="18" height="20"><path d="M8 0v20l9-10zM1 0h3v20H1z" fill="#767676" /></svg></button>
                  <button class="bare t8" aria-label="다음 키"><svg width="26" height="20"><path d="M15 0v20l10-10z" fill="#767676" /><path d="M7 5l5 5-5 5-5-5z" fill="none" stroke="#767676" stroke-width="2" /></svg></button>
                  <button class="bare t8" aria-label="끝으로"><svg width="26" height="20"><path d="M14 0v20l10-10zM0 0h3v20H0zM5 0h3v20H5zM10 0h3v20h-3z" fill="#767676" /></svg></button>
                  <button class="bare t10" aria-label="끝 설정"><svg width="10" height="24"><path d="M7 1H4L2 5l2 2v10l-2 2 2 4h3z" fill="#767676" /></svg></button>
                  <button class="bare t4" aria-label="루프"><svg width="20" height="10"><path d="M0 5h18M14 1l5 4-5 4" fill="none" stroke="#808080" stroke-width="2" /></svg></button>
                </div>
              </div>
              <div class="timeline">
                <div class="strip top">
                  <i class="range"></i>
                  <svg class="full">
                    <g v-for="k in timeTicks" :key="k" :class="{ out: k < 0 || k > 9 }">
                      <line v-if="k !== 0" :x1="timeX(k) + 1" :x2="timeX(k) + 1" y1="23" y2="34" /><text v-if="k !== 0" :x="timeX(k) + 7" y="31">{{ timeLabel(k) }}</text>
                    </g>
                    <path d="M54 2q0-1 1-1h14q1 0 1 1v21l-8 10-8-10z" fill="#7a6866" /><path d="M62 1h8v4l-5-2z" fill="#3f8f3f" /><text class="big" x="73" y="16">0.00</text>
                  </svg>
                </div>
                <div class="lanes">
                  <i class="range"></i>
                  <svg class="full"><line v-for="k in timeTicks" :key="k" :x1="timeX(k)" :x2="timeX(k)" y1="0" y2="100%" /></svg>
                  <p class="message">선택된 애니메이션 없음</p>
                </div>
                <div class="strip foot">
                  <i class="range"></i>
                  <svg class="full">
                    <g v-for="k in timeTicks" :key="k" :class="{ out: k < 0 || k > 9 }">
                      <line v-if="k !== 0" :x1="timeX(k) + 1" :x2="timeX(k) + 1" y1="0" y2="11" /><text v-if="k !== 0" :x="timeX(k) + 7" y="13">{{ timeLabel(k) }}</text>
                    </g>
                    <path d="M54 39q0 1 1 1h14q1 0 1-1V10L62 0l-8 10z" fill="#7a6866" /><path d="M62 40h8v-3l-5 1z" fill="#3f8f3f" /><text class="big" x="73" y="38">0.00</text>
                  </svg>
                </div>
                <i class="playline"></i><i class="endline"></i>
              </div>
            </div>
          </div>
        </section>
      </div>
    </main>
  </div>
</template>

<style>
body { background: #222; }
</style>

<style scoped>
.editor { display: flex; flex-direction: column; min-height: 100vh; background: #222; color: #ddd; font-family: Roboto, "Noto Sans CJK KR", sans-serif; font-size: 15px; line-height: 20px; overflow: hidden; }
.editor *, .editor *::before { box-sizing: border-box; }
.sprite { position: absolute; width: 0; height: 0; }
svg { flex: none; display: block; }
ul, h3, p { margin: 0; padding: 0; list-style: none; font-weight: 400; }
button, input, select { font: inherit; color: inherit; }
button { display: flex; align-items: center; padding: 0; cursor: pointer; }
.bare { background: none; border: 0; }
a { color: inherit; text-decoration: none; border-bottom: 1px dotted #ccc; }

.titlebar { position: relative; display: flex; height: 35px; border-bottom: 1px solid #000; background: linear-gradient(#0000, #0008), repeating-linear-gradient(120deg, #4c4c4c 0 20px, #3d3d3d 20px 40px); z-index: 2; }
.logo { width: 24px; height: 28px; margin: 1px 0 0 2px; }
.doc-tabs { display: flex; align-items: flex-end; margin-left: 20px; }
.doc-tab { position: relative; display: flex; align-items: center; height: 31px; padding-bottom: 2px; background: linear-gradient(#757575, #5c5c5c); color: #e0e0e0; text-shadow: 1px 2px 1px #000; clip-path: polygon(0 100%, 5px 92%, 8px 80%, 14px 12%, 20px 0, calc(100% - 20px) 0, calc(100% - 14px) 12%, calc(100% - 8px) 80%, calc(100% - 5px) 92%, 100% 100%); }
.doc-tab.first { width: 262px; padding-left: 29px; z-index: 1; }
.doc-tab.second { width: 248px; margin-left: -20px; padding-left: 15px; padding-right: 17px; }
.doc-tab.third { width: 264px; margin-left: -20px; padding-left: 24px; padding-right: 26px; z-index: 2; background: linear-gradient(#9c9c9c, #7c7c7c); }
.doc-tab.fourth { width: 256px; margin-left: -20px; padding-left: 15px; padding-right: 25px; }
.doc-icon { width: 22px; height: 22px; margin-right: 7px; }
.doc-title { flex: 1; }
.tab-x { color: #2a2a2a; }
.doc-tab .tab-x { color: #484848; }
.tutorial { position: absolute; right: 107px; top: -16px; width: 66px; height: 66px; border-radius: 50%; display: flex; align-items: center; justify-content: center; background: radial-gradient(circle, #222 8px, #1a8a22 21px, #12b41f 22px, #0f5a16 23px, #0f5a1688 33px); }
.window-buttons { margin-left: auto; display: flex; gap: 1px; height: 21px; padding-right: 2px; z-index: 3; }
.win { width: 30px; height: 21px; justify-content: center; border: 1px solid #999; border-top: 0; border-radius: 0 0 3px 3px; background: linear-gradient(#5a5a5a, #2e2e2e); }
.win.wide { width: 52px; }

.menubar { position: relative; display: flex; align-items: center; gap: 25px; height: 25px; padding: 0 10px 0 13px; background: linear-gradient(#262626, #181818); border-bottom: 1px solid #000; z-index: 1; }
.parent-label { margin-left: auto; color: #777; text-shadow: 1px 2px 1px #000; }
.parent-link { margin-left: -16px; font-size: 17px; line-height: 19px; }

.toolbar { position: relative; display: flex; height: 80px; background: #3e3e3e; border-top: 1px solid #2a2a2a; padding: 0 4px 0 9px; }
.fold { position: absolute; left: 0; top: 0; width: 12px; height: 12px; background: linear-gradient(135deg, #a8841c 50%, #0000 50%); z-index: 1; }
.tool { flex-direction: column; padding-top: 5px; height: 74px; text-shadow: 1px 2px 1px #000; }
.bar { width: 3px; background: #2b2b2b; margin: 3px 0; flex: none; }
.drop { color: #b8b8b8; }
.compile { width: 54px; }
.compile + .drop { width: 44px; justify-content: center; margin-right: 3px; }
.save { width: 50px; margin-left: 16px; }
.find { width: 50px; margin-left: 15px; }
.find + .bar { margin-left: 19px; }
.reflector { width: 92px; margin: 0 16px 0 15px; }
.play { width: 52px; margin-left: 16px; }
.play + .drop { width: 42px; padding-left: 18px; }
.debug { display: flex; flex-direction: column; align-items: center; padding-top: 20px; }
.debug label { line-height: 24px; }
.combo { position: relative; display: flex; align-items: center; color: #000; }
.combo select { appearance: none; border: 0; outline: 0; background: none; width: 100%; height: 100%; padding: 0 16px 0 7px; }
.combo svg { position: absolute; right: 10px; pointer-events: none; }
.debug-combo { width: 256px; height: 28px; background: #dcdcdc; border: 1px solid #aaa; border-radius: 2px; }
.modes { margin-left: auto; display: flex; align-items: center; }
.mode { height: 55px; font-size: 24px; font-weight: 300; padding: 0 17px 0 0; gap: 6px; }
.mode.on { width: 160px; background: #db820b; border-radius: 3px; padding: 0 0 0 7px; }
.chevron { width: 10px; height: 24px; margin: 0 13px 0 5px; }

.body { flex: 1; display: flex; gap: 6px; }
.left { width: 288px; flex: none; display: flex; flex-direction: column; gap: 6px; padding: 6px 0 0 1px; }
.dock { display: flex; flex-direction: column; }
.dock-tab { display: flex; align-items: center; width: 188px; height: 28px; margin-left: 5px; padding: 0 12px 0 8px; background: #3e3e3e; border-radius: 2px 2px 0 0; flex: none; text-shadow: 1px 2px 1px #000; font-size: 15px; }
.dock-tab > span { flex: 1; margin-left: 7px; }
.pane { flex: 1; background: #3e3e3e; min-height: 0; }
.palette { height: 310px; }
.palette .pane { display: flex; flex-direction: column; padding: 8px 3px 3px; }
.search { position: relative; display: flex; height: 23px; background: #cbcbcb; border-radius: 3px; flex: none; overflow: hidden; }
.search input { flex: 1; min-width: 0; border: 0; outline: 0; background: none; padding: 0 24px 0 7px; appearance: none; color: #222; }
.search input::placeholder { color: #8a8a8a; opacity: 1; }
.search svg { position: absolute; right: 1px; top: 1px; width: 20px; height: 20px; color: #111; }
.palette .search { margin: 0 5px 5px; }
.scroller { position: relative; flex: 1; min-height: 0; display: flex; overflow: hidden; }
.scroller::before { content: ""; position: absolute; inset: 0; box-shadow: inset 0 7px 5px -5px #111, inset 0 -7px 5px -5px #111; z-index: 1; }
.palette-list { flex: 1; margin-top: -17px; height: 0; }
.category { display: flex; align-items: center; gap: 5px; height: 27px; background: #2e2e2e; font-size: 17px; font-weight: 500; text-shadow: 1px 2px 1px #000; padding-left: 1px; }
.category svg { color: #bbb; }
.palette-list li { display: flex; align-items: center; height: 25px; padding: 0 0 1px 26px; font-size: 16px; }
.star { width: 14px; height: 14px; color: #6e6e6e; margin-right: 1px; }
.wicon { width: 20px; height: 16px; margin-right: 3px; }
.sel { background: #8a8a8a; color: #000; }
.track { position: relative; width: 20px; background: linear-gradient(#666, #666) 10px 0 / 1px 100% no-repeat; }
.thumb { position: absolute; left: 3px; top: 36px; width: 13px; height: 113px; background: #fff; border-radius: 2px; }
.hierarchy { flex: 1; margin-top: 1px; }
.hierarchy .pane { padding-top: 11px; }
.hierarchy .search { margin: 0 10px 5px; }
.tree { padding: 0 5px; }
.tree li { display: flex; align-items: center; height: 21px; font-size: 15px; padding-right: 4px; }
.tree li:nth-child(2n) { height: 20px; }
.tree li.bold { font-weight: 700; font-size: 17px; }
.tree-name { flex: 1; width: 0; white-space: pre; }
.tree button + button { margin-left: 6px; }
.exp { width: 10px; height: 10px; color: #bbb; margin: 0 4px 4px 1px; }
.d1 { padding-left: 13px; }
.d2 { padding-left: 37px; }
.d1 .exp { margin-right: 1px; }
.animations { height: 300px; }
.anim-row { display: flex; align-items: flex-start; gap: 3px; padding: 7px 9px 0 8px; }
.anim-row .search { flex: 1; margin-top: 2px; }
.add-anim { height: 27px; width: 100px; padding-left: 5px; gap: 4px; background: #4aa552; border: 1px solid #3c8a44; border-radius: 2px; color: #fff; text-shadow: 1px 1px 1px #000; white-space: nowrap; }

.right { flex: 1; min-width: 0; display: flex; flex-direction: column; gap: 6px; padding-top: 6px; }
.upper { flex: 1; display: flex; gap: 7px; min-height: 0; }
.viewport { position: relative; flex: 1; min-width: 0; display: grid; grid-template: 23px 1fr / 23px 1fr; border: 2px solid #3a3a3a; background: #2e2e2e; overflow: hidden; }
.ruler-h { width: 100%; height: 23px; border-bottom: 1px solid #666; }
.ruler-v { width: 23px; height: 100%; border-right: 1px solid #666; }
.ruler-h text, .ruler-v text { fill: #b0b0b0; font-size: 13px; }
.canvas { position: relative; background: #262626; overflow: hidden; }
.grid { position: absolute; inset: 0; width: 100%; height: 100%; }
.design { position: absolute; left: 143px; top: 86px; width: 800px; height: 450px; background: #8ab899; border: 1px dashed #dfe8e2; outline: 2px solid #00ff00; outline-offset: 1px; }
.slot-text { position: absolute; left: 124px; width: 124px; text-align: center; color: #fff; font-size: 13px; font-weight: 700; line-height: 16px; }
.magic-text { top: 103px; }
.sword-text { top: 161px; }
.slot-btn { position: absolute; left: 123px; width: 125px; height: 21px; border: 1px solid #a3a8a4; background: linear-gradient(#d8d8d8, #b0b0b0); }
.magic-btn { top: 124px; }
.sword-btn { top: 181px; }
.anchor { position: absolute; width: 31px; height: 31px; }
.tl { left: -31px; top: -31px; }
.tr { left: 799px; top: -31px; transform: scaleX(-1); }
.bl { left: -31px; top: 449px; transform: scaleY(-1); }
.br { left: 799px; top: 449px; transform: scale(-1); }
.dot { position: absolute; width: 8px; height: 8px; border-radius: 50%; background: #fff; box-shadow: 0 0 0 1px #222; }
.n { left: 393px; top: -12px; }
.s { left: 393px; top: 450px; }
.w { left: -13px; top: 219px; }
.e { left: 800px; top: 219px; }
.hud-top { position: absolute; left: 8px; top: 2px; display: flex; gap: 54px; font-family: "Roboto Condensed", Roboto, "Noto Sans CJK KR", sans-serif; font-size: 25px; line-height: 36px; font-weight: 500; color: #ffffff44; }
.coords { font-size: 24px; }
.hud-bottom { position: absolute; left: 8px; right: 11px; bottom: 3px; display: flex; justify-content: space-between; align-items: flex-end; font-family: "Roboto Condensed", Roboto, "Noto Sans CJK KR", sans-serif; font-size: 27px; line-height: 32px; font-weight: 500; color: #ffffff44; }
.hud-bottom p { font-weight: 500; }
.dpi { display: flex; align-items: center; gap: 12px; }
.view-tools { position: absolute; right: 2px; top: 2px; display: flex; align-items: flex-start; gap: 2px; }
.group { display: flex; height: 31px; border-radius: 8px; overflow: hidden; background: #acacac; box-shadow: 0 0 0 1px #111; }
.group.low { height: 28px; margin-top: 1px; }
.group.dim { background: #666; }
.first-orange, .snap { margin-left: 4px; }
.loc { margin-left: 2px; }
.vt { width: 28px; border: 0; background: none; justify-content: center; color: #000; }
.vt.on { background: #bb7107; }
.group > .vt:first-child:not(:last-child) { width: 29px; border-right: 1px solid #111; }
.loc > .vt.on:first-child { border-right-color: #bb7107; }
.vt.text { font-weight: 500; gap: 2px; white-space: nowrap; }
.vt.lang { width: 50px; flex-direction: column; gap: 0; font-size: 15px; }
.vt.four { width: 31px; flex-direction: column; gap: 0; font-weight: 700; font-size: 17px; }
.vt.r { width: 30px; font-size: 18px; font-weight: 700; color: #444; }
.vt.size { width: 82px; font-size: 15px; }
.vt.fill { width: 92px; font-size: 15px; font-weight: 700; }

.details { width: 529px; flex: none; }
.details .pane { display: flex; flex-direction: column; padding: 0 0 2px; overflow: hidden; }
.name-row { display: flex; align-items: center; height: 49px; padding: 0 52px 1px 9px; }
.name-input { flex: 1; min-width: 0; height: 23px; border: 0; border-radius: 4px; background: #d8d8d8; color: #000; padding: 0 6px; font-size: 16px; }
.isvar { display: flex; align-items: center; gap: 5px; margin: 0 24px 0 9px; }
.check { appearance: none; width: 18px; height: 18px; margin: 0; background: #adadad; border-radius: 3px; flex: none; }
.isvar .check { background: #d0d0d0; }
.check:checked::before { content: ""; display: block; width: 6px; height: 11px; margin: 1px 0 0 6px; border: solid #555; border-width: 0 3px 3px 0; transform: rotate(40deg); }
.open-link { font-size: 17px; line-height: 22px; }
.details-search { display: flex; align-items: center; height: 24px; margin-bottom: 3px; padding: 0 6px 0 5px; }
.details-search .search { flex: 1; }
.matrix { width: 34px; height: 28px; margin: 0 5px 0 11px; justify-content: center; border: 1px solid #222; background: linear-gradient(#d6d6d6, #a9a9a9); border-radius: 2px; }
.view-eye { gap: 5px; color: #bbb; }
.props { position: relative; flex: 1 1 0px; min-height: 0; overflow: hidden; font-size: 13px; }
.props::before { content: ""; position: absolute; left: 179px; top: 0; bottom: 0; width: 1px; background: #222; z-index: 1; }
.section { display: flex; align-items: center; gap: 4px; height: 36px; margin: 0 3px; padding-left: 4px; background: #2e2e2e; font-size: 17px; font-weight: 700; text-shadow: 1px 2px 1px #000; }
.section svg { color: #bbb; }
.row { display: flex; }
.h26 { height: 26px; } .h28 { height: 28px; } .h30 { height: 30px; } .h32 { height: 32px; } .h34 { height: 34px; } .h42 { height: 42px; } .h100 { height: 100px; }
.row.last { margin-bottom: 4px; }
.lab { position: relative; width: 180px; flex: none; display: flex; align-items: center; padding: 0 5px 0 23px; }
.sub .lab { padding-left: 35px; }
.tag { width: 14px; height: 14px; margin-left: auto; }
.closed, .opened { position: absolute; left: 9px; width: 7px; height: 12px; color: #999; }
.opened { width: 10px; height: 10px; top: 8px; color: #aaa; }
.sub .closed { left: 21px; }
.val { flex: 1; display: flex; align-items: center; padding-left: 4px; }
.reset { margin-left: 9px; }
.reset svg { width: 12px; height: 12px; }
.anchor-btn { width: 134px; height: 34px; padding: 0 10px 0 8px; justify-content: space-between; border: 1px solid #222; border-radius: 2px; background: linear-gradient(#dcdcdc, #a8a8a8); color: #000; }
.anchor-btn + .reset { margin-left: 6px; }
.num { display: flex; align-items: center; width: 131px; height: 20px; background: #d8d8d8; border-radius: 4px; color: #111; padding: 0 7px 0 5px; }
.num input { flex: 1; width: 0; min-width: 0; border: 0; outline: 0; background: none; padding: 0; }
.num svg { width: 12px; height: 12px; }
.num.half { width: 144px; gap: 8px; }
.pair { gap: 4px; }
.swatch { width: 23px; height: 23px; background: #8ab899; }
.brush .reset { margin-left: 117px; }
.bind { margin-left: auto; margin-right: 22px; width: 63px; height: 27px; justify-content: center; gap: 3px; border: 1px solid #1e1e1e; border-radius: 2px; background: linear-gradient(#dcdcdc, #ababab); color: #000; }
.thumbnail { width: 80px; height: 80px; margin-left: 6px; text-align: center; line-height: 80px; background: radial-gradient(circle at 50% 90%, #666, #484848); box-shadow: inset 0 -4px #fff, 0 1px 3px 2px #222; }
.asset { width: 198px; margin-left: 9px; }
.asset-combo { width: 198px; height: 22px; border: 0; border-radius: 4px; background: #5c5c5c; color: #fff; padding: 0 5px 0 3px; justify-content: space-between; text-shadow: 1px 2px 1px #000; }
.asset-tools { display: flex; gap: 14px; padding: 7px 0 0 7px; color: #c4c4c4; }
.tint-bar { width: 244px; height: 15px; background: #8ab899; }
.inherit { display: flex; align-items: center; gap: 5px; margin-left: 3px; }
.tint .reset { margin-left: 4px; }
.draw-combo { width: 131px; height: 25px; border: 1px solid #222; border-radius: 2px; background: linear-gradient(#dcdcdc, #a8a8a8); }
.props-track { position: absolute; right: 5px; top: 3px; bottom: 3px; width: 13px; background: linear-gradient(#6a6a6a, #6a6a6a) 6px 0 / 1px 100% no-repeat; }
.props-thumb { display: block; height: 169px; background: #fff; border-radius: 2px; }

.lower { height: 300px; display: flex; flex-direction: column; padding: 0 2px 2px 0; }
.bottom-tabs { display: flex; gap: 2px; }
.bottom-tabs .dock-tab { padding-left: 7px; }
.bottom-tabs .dock-tab.idle { background: #2c2c2c; margin-left: 0; }
.sequencer { flex: 1; display: flex; flex-direction: column; background: #404040; padding: 0 2px 2px 0; color: #909090; }
.seq-toolbar { display: flex; align-items: center; height: 38px; padding: 0 10px 0 17px; background: #424242; }
.seq-toolbar .bar { height: 32px; background: #343434; margin: 0; }
.c { margin-left: 5px; }
.s2 { margin-left: 19px; }
.s2 .c { margin-left: 1px; }
.s3 { margin-left: 28px; }
.s3 .c { margin: 0 11px 0 8px; }
.s4 { margin-left: 11px; }
.s5 { margin: 0 12px 0 21px; }
.magnet { width: 40px; height: 36px; margin-left: 6px; border: 0; border-radius: 2px; background: #907e74; justify-content: center; }
.s6 { margin: 0 10px 0 15px; }
.fps { font-size: 15px; gap: 11px; margin: 0 9px 0 6px; white-space: nowrap; }
.s7 { margin-left: 12px; }
.seq-lock { margin-left: auto; }
.seq-main { flex: 1; display: flex; min-height: 0; }
.tracks { width: 493px; flex: none; display: flex; flex-direction: column; }
.track-tools { display: flex; align-items: center; height: 34px; padding-left: 10px; background: #424242; }
.add-track { width: 75px; height: 26px; gap: 4px; padding: 0 5px; border: 1px solid #8a9a8a; background: #76867a; border-radius: 2px; color: #bbb; text-shadow: 1px 2px 1px #333; white-space: nowrap; }
.filter { gap: 4px; margin: 0 10px 0 7px; text-shadow: 1px 2px 1px #222; color: #a5a5a5; white-space: nowrap; }
.track-tools .search { width: 257px; background: #7e7e7e; }
.track-tools .search input::placeholder { color: #5a5a5a; }
.track-tools .search svg { color: #222; }
.time { margin-left: 11px; color: #a08a7e; }
.items { flex: 1; display: flex; align-items: flex-end; padding: 0 0 5px 12px; background: #3e3e3e; }
.transport { display: flex; align-items: center; height: 41px; padding-left: 86px; background: #424242; }
.t2 { margin-left: 9px; } .t3 { margin-left: 4px; } .t4 { margin-left: 8px; } .t5 { margin-left: 13px; } .t6 { margin-left: 16px; } .t8 { margin-left: 6px; } .t10 { margin-left: 9px; }
.timeline { position: relative; flex: 1; min-width: 0; display: flex; flex-direction: column; background: #252525; overflow: hidden; }
.strip { position: relative; background: #252525; }
.top { height: 34px; }
.foot { height: 41px; border-top: 1px solid #484848; }
.range { position: absolute; left: 62px; top: 0; bottom: 0; width: 620px; background: #333; }
.lanes { position: relative; flex: 1; background: #2d2d2d; }
.lanes .range { background: #414141; }
.full { position: absolute; inset: 0; width: 100%; height: 100%; }
.full line { stroke: #9c9c9c; stroke-width: 2; }
.full .out line { stroke: #606060; }
.lanes .full line { stroke: #262626; opacity: .6; }
.full text { fill: #767676; font-size: 12px; }
.full .out text { fill: #505050; }
.full text.big { fill: #b4b4b4; font-size: 17px; }
.playline { position: absolute; left: 61px; top: 20px; bottom: 30px; width: 2px; background: linear-gradient(90deg, #777, #2f9a35); }
.endline { position: absolute; left: 681px; top: 0; bottom: 0; width: 1px; background: #8b2020; }
.message { position: absolute; left: 171px; top: 42px; font-size: 30px; line-height: 44px; color: #e6e6e6; text-shadow: 2px 2px 1px #000; white-space: nowrap; }
</style>
